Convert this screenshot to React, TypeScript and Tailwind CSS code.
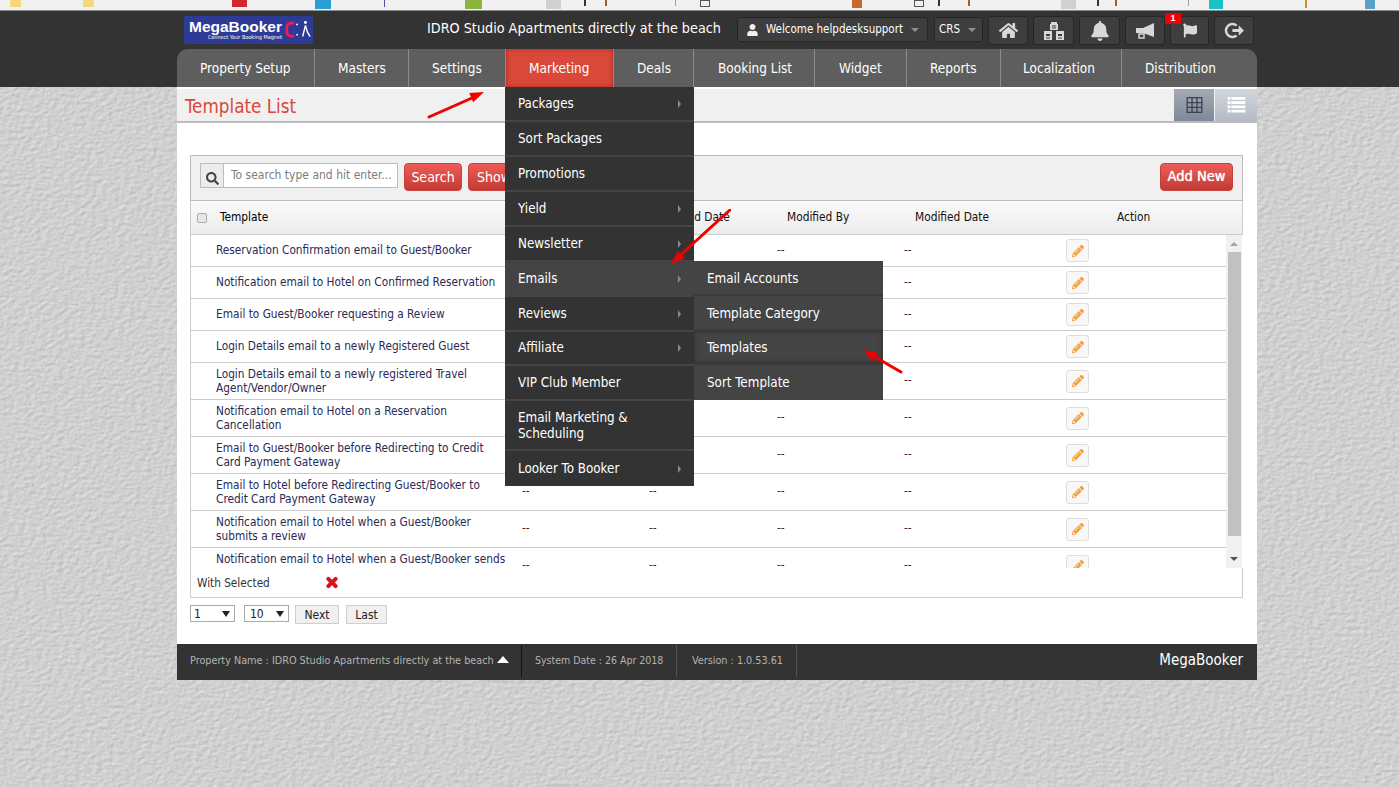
import React from "react";
import { FaHome, FaBell, FaFlag, FaUser, FaPencilAlt, FaTimes, FaSearch } from "react-icons/fa";

const navItems = [
  { t: "Property Setup", w: "w-[138px] pl-[23px]" },
  { t: "Masters", w: "w-[94px] pl-[23px]" },
  { t: "Settings", w: "w-[97px] pl-[23px]" },
  { t: "Marketing", w: "w-[108px] pl-[23px]", active: true },
  { t: "Deals", w: "w-[80px] pl-[23px]" },
  { t: "Booking List", w: "w-[121px] pl-[24px]" },
  { t: "Widget", w: "w-[92px] pl-[24px]" },
  { t: "Reports", w: "w-[94px] pl-[23px]" },
  { t: "Localization", w: "w-[121px] pl-[22px]" },
  { t: "Distribution", w: "w-[135px] pl-[23px]" },
];

const menu = [
  { t: "Packages", a: true, h: "h-[35px]" },
  { t: "Sort Packages", h: "h-[35px]" },
  { t: "Promotions", h: "h-[35px]" },
  { t: "Yield", a: true, h: "h-[35px]" },
  { t: "Newsletter", a: true, h: "h-[35px]" },
  { t: "Emails", a: true, h: "h-[35px]", on: true },
  { t: "Reviews", a: true, h: "h-[35px]" },
  { t: "Affiliate", a: true, h: "h-[34px]" },
  { t: "VIP Club Member", h: "h-[35px]" },
  { t: "Email Marketing & Scheduling", h: "h-[50px] pt-[2px]", wrap: true },
  { t: "Looker To Booker", a: true, h: "h-[35px]" },
];

const sub = [
  { t: "Email Accounts", h: "h-[35px] pt-[2px]" },
  { t: "Template Category", h: "h-[35px] pt-[2px]" },
  { t: "Templates", h: "h-[34px] pt-[2px]", on: true },
  { t: "Sort Template", h: "h-[35px]" },
];

const rows: { l: string[]; h: string; pb: string }[] = [
  { l: ["Reservation Confirmation email to Guest/Booker"], h: "h-[32px]", pb: "pb-[2px]" },
  { l: ["Notification email to Hotel on Confirmed Reservation"], h: "h-[32px]", pb: "pb-[2px]" },
  { l: ["Email to Guest/Booker requesting a Review"], h: "h-[32px]", pb: "pb-[2px]" },
  { l: ["Login Details email to a newly Registered Guest"], h: "h-[32px]", pb: "pb-[2px]" },
  { l: ["Login Details email to a newly registered Travel", "Agent/Vendor/Owner"], h: "h-[37px]", pb: "" },
  { l: ["Notification email to Hotel on a Reservation", "Cancellation"], h: "h-[37px]", pb: "" },
  { l: ["Email to Guest/Booker before Redirecting to Credit", "Card Payment Gateway"], h: "h-[37px]", pb: "" },
  { l: ["Email to Hotel before Redirecting Guest/Booker to", "Credit Card Payment Gateway"], h: "h-[37px]", pb: "" },
  { l: ["Notification email to Hotel when a Guest/Booker", "submits a review"], h: "h-[37px]", pb: "" },
  { l: ["Notification email to Hotel when a Guest/Booker sends"], h: "h-[37px]", pb: "pb-[14px]" },
];

function Arrow({ c, box, line, head }: { c: string; box: string; line: string; head: string }) {
  return (
    <svg className={c} viewBox={box} fill="none">
      <path d={line} stroke="#f00000" strokeWidth="3" strokeLinecap="round" />
      <path d={head} fill="#f00000" />
    </svg>
  );
}

function IconBtn({ children, w }: { children: React.ReactNode; w: string }) {
  return (
    <div className={`${w} h-[29px] rounded-[3px] border border-[#262626] bg-[#3e3e3e] flex items-center justify-center text-[#d8d8d8]`}>
      {children}
    </div>
  );
}

function Caret() {
  return <span className="ml-auto h-0 w-0 border-y-[4px] border-l-[3px] border-y-transparent border-l-[#8a8a8a]" />;
}

export default function App() {
  return (
    <div className="relative min-h-[787px] overflow-hidden bg-[#d1d1d1] font-['DejaVu_Sans_Condensed','DejaVu_Sans',sans-serif] [font-stretch:condensed]">
      <svg className="absolute inset-0 h-full w-full" aria-hidden="true">
        <filter id="paper" x="0" y="0" width="100%" height="100%" colorInterpolationFilters="sRGB">
          <feTurbulence type="fractalNoise" baseFrequency="0.18 0.28" numOctaves="3" seed="4" />
          <feDiffuseLighting surfaceScale="0.4" diffuseConstant="1" lightingColor="#f0f0f0">
            <feDistantLight azimuth="45" elevation="60" />
          </feDiffuseLighting>
        </filter>
        <rect width="100%" height="100%" filter="url(#paper)" />
      </svg>

      <div className="relative">
        {/* browser bookmarks strip */}
        <div className="flex h-[11px] items-start border-b border-[#8c8c8c] bg-[#f1f1f1]">
          <span className="ml-[10px] h-[7px] w-[11px] bg-[#f5d77c]" />
          <span className="ml-[62px] h-[7px] w-[11px] bg-[#f5d77c]" />
          <span className="ml-[138px] h-[7px] w-[15px] bg-[#d8252b]" />
          <span className="ml-[68px] h-[9px] w-[16px] bg-[#2a9fd6]" />
          <span className="ml-[53px] h-[7px] w-[1px] bg-[#5050a0]" />
          <span className="ml-[80px] h-[9px] w-[17px] bg-[#8ab53c]" />
          <span className="ml-[64px] h-[9px] w-[15px] bg-[#d0d0d0]" />
          <span className="ml-[23px] h-[6px] w-[2px] bg-[#333333]" />
          <span className="ml-[19px] h-[6px] w-[2px] bg-[#a06020]" />
          <span className="ml-[68px] h-[6px] w-[1px] bg-[#b0a090]" />
          <span className="ml-[24px] h-[7px] w-[10px] border border-[#555555]" />
          <span className="ml-[142px] h-[8px] w-[10px] bg-[#c8682a]" />
          <span className="ml-[52px] h-[7px] w-[10px] border border-[#555555]" />
          <span className="ml-[14px] h-[6px] w-[2px] bg-[#333333]" />
          <span className="ml-[28px] h-[6px] w-[2px] bg-[#a06020]" />
          <span className="ml-[91px] h-[9px] w-[15px] bg-[#d0d0d0]" />
          <span className="ml-[21px] h-[6px] w-[2px] bg-[#333333]" />
          <span className="ml-[16px] h-[6px] w-[2px] bg-[#a06020]" />
          <span className="ml-[71px] h-[6px] w-[1px] bg-[#b0a090]" />
          <span className="ml-[20px] h-[9px] w-[14px] bg-[#18c4c4]" />
          <span className="ml-[82px] h-[8px] w-[2px] bg-[#d08a30]" />
          <span className="ml-[58px] h-[9px] w-[10px] bg-[#5aa0c8]" />
        </div>

        {/* dark header */}
        <div className="h-[76px] bg-[#333333]">
          <div className="ml-[177px] w-[1080px]">
            <div className="flex h-[38px] items-start pt-[5px]">
              <div className="ml-[7px] flex h-[28px] w-[129px] items-center rounded-[2px] bg-[#2d3a96] pl-[4px]">
                <div className="flex w-[94px] flex-none flex-col items-end leading-none">
                  <span className="text-[15.500px] font-bold leading-[15px] text-white font-['Liberation_Sans',sans-serif]">MegaBooker</span>
                  <span className="text-[5.500px] leading-[7px] text-white">Connect Your Booking Magnet</span>
                </div>
                <svg viewBox="0 0 30 24" className="ml-[2px] h-[24px] w-[28px]" fill="none">
                  <path d="M11 4.500 H8 Q3 5 3 10 V13 Q3 18 8 18.500 H11" stroke="#ec1b5a" strokeWidth="3" />
                  <circle cx="14" cy="6" r="1" fill="#fff" />
                  <circle cx="14" cy="17" r="1" fill="#fff" />
                  <circle cx="23" cy="4" r="1.600" fill="#fff" />
                  <path d="M23 7 L20 19 M23 7 L25 14 L28 19" stroke="#fff" strokeWidth="1.500" />
                </svg>
              </div>
              <span className="ml-[114px] mt-[3px] w-[310px] whitespace-nowrap text-[14.250px] leading-[18px] text-white">IDRO Studio Apartments directly at the beach</span>
              <div className="mt-[1px] flex h-[25px] w-[191px] items-center rounded-[3px] border border-[#262626] bg-[#3e3e3e] pl-[9px] text-[11.500px] text-white">
                <FaUser className="h-[12px] w-[11px] text-[#f0f0f0]" />
                <span className="ml-[8px] whitespace-nowrap">Welcome helpdesksupport</span>
                <span className="ml-[8px] h-0 w-0 border-x-[4px] border-t-[4px] border-x-transparent border-t-[#8f8f8f]" />
              </div>
              <div className="ml-[6px] mt-[1px] flex h-[25px] w-[49px] items-center rounded-[3px] border border-[#262626] bg-[#3e3e3e] pl-[4px] text-[11.500px] text-white">
                CRS
                <span className="ml-[8px] h-0 w-0 border-x-[4px] border-t-[4px] border-x-transparent border-t-[#8f8f8f]" />
              </div>
              <div className="ml-[5px] flex gap-[5px]">
                <IconBtn w="w-[40px]"><FaHome className="h-[17px] w-[19px]" /></IconBtn>
                <IconBtn w="w-[41px]">
                  <svg viewBox="0 0 22 20" className="h-[20px] w-[22px]" fill="currentColor">
                    <path d="M8 1h6v2h1v6H7V3h1z" />
                    <path d="M1 10h8v9H1zM13 10h8v9h-8z" />
                    <path d="M3 13h4v2H3zM15 13h4v2h-4zM3 16.500h4v1H3zM15 16.500h4v1h-4z" fill="#3e3e3e" />
                    <path d="M9 4.500h4v1H9zM9 6.500h4v1H9z" fill="#3e3e3e" />
                  </svg>
                </IconBtn>
                <IconBtn w="w-[41px]"><FaBell className="h-[20px] w-[18px]" /></IconBtn>
                <IconBtn w="w-[40px]">
                  <svg viewBox="0 0 20 16" className="h-[16px] w-[20px]" fill="currentColor">
                    <path d="M19 0v14L8 10H1V5h7z" />
                    <path d="M4 11h5v4H4z" fill="none" stroke="currentColor" strokeWidth="1.500" />
                  </svg>
                </IconBtn>
                <div className="relative">
                  <IconBtn w="w-[39px]"><FaFlag className="h-[15px] w-[14px]" /></IconBtn>
                  <span className="absolute left-[-5px] top-[-3px] flex h-[11px] w-[16px] items-center justify-center bg-[#f00000] text-[9px] font-bold leading-none text-white font-['Liberation_Sans',sans-serif]">1</span>
                </div>
                <IconBtn w="w-[40px]">
                  <svg viewBox="0 0 20 18" className="h-[19px] w-[21px]" fill="none">
                    <path d="M12 4.200A6.200 6.200 0 1 0 12 13.800" stroke="currentColor" strokeWidth="2.400" />
                    <path d="M8 7.500h6V4l5 5-5 5v-3.500H8z" fill="currentColor" />
                  </svg>
                </IconBtn>
              </div>
            </div>
            <div className="flex h-[38px] overflow-hidden rounded-t-[11px] bg-[#5e5e5e]">
              {navItems.map((n) => (
                <div
                  key={n.t}
                  className={`${n.w} flex items-center whitespace-nowrap border-r border-[#8a8a8a] text-[13.500px] text-white last:border-r-0 ${n.active ? "bg-[#d9483b] shadow-[inset_0_0_4px_#a0281e]" : ""}`}
                >
                  {n.t}
                </div>
              ))}
            </div>
          </div>
        </div>

        {/* white page */}
        <div className="relative ml-[177px] w-[1080px] bg-white pt-[2px]">
          <div className="flex h-[34px] items-stretch border-b-2 border-[#bdbdbd] bg-[#f0f0f0]">
            <h1 className="ml-[8px] mt-[3px] self-center text-[18.700px] font-normal leading-[24px] text-[#d9483b]">Template List</h1>
            <div className="ml-auto flex gap-[1px]">
              <div className="flex w-[40px] items-center justify-center bg-gradient-to-b from-[#a5abb6] to-[#7f8898]">
                <svg viewBox="0 0 17 17" className="h-[16px] w-[17px]" fill="none" stroke="#3b4250" strokeWidth="1.400">
                  <path d="M.7.7h15.600v15.600H.7zM.7 5.900h15.600M.7 11.100h15.600M5.900.7v15.600M11.100.7v15.600" />
                </svg>
              </div>
              <div className="flex w-[42px] items-center justify-center bg-gradient-to-b from-[#d2d6dc] to-[#b5bbc6]">
                <svg viewBox="0 0 19 17" className="h-[16px] w-[19px]" fill="#ffffff">
                  <path d="M0 0h3v3H0zM4 0h15v3H4zM0 4.500h3v3H0zM4 4.500h15v3H4zM0 9h3v3H0zM4 9h15v3H4zM0 13.500h3v3H0zM4 13.500h15v3H4z" />
                </svg>
              </div>
            </div>
          </div>

          <div className="pl-[13px] pr-[14px] pt-[32px]">
            {/* toolbar */}
            <div className="flex h-[46px] items-start border border-[#bcbcbc] bg-[#f0f0f0] px-[9px] pt-[7px]">
              <div className="flex h-[25px] w-[198px] border border-[#bcbcbc] bg-white">
                <div className="flex w-[22px] items-end justify-center bg-[#ececec] pb-[2px]">
                  <FaSearch className="h-[13px] w-[13px] text-[#444444]" />
                </div>
                <div className="flex-1 whitespace-nowrap border-l border-[#bcbcbc] pl-[7px] pt-[1px] text-[12px] leading-[20px] text-[#7d7d7d]">To search type and hit enter...</div>
              </div>
              <button className="ml-[6px] h-[28px] w-[58px] rounded-[4px] border border-[#c9403a] bg-gradient-to-b from-[#ee5d58] to-[#c23a34] text-[14px] text-white">Search</button>
              <button className="ml-[6px] h-[28px] w-[60px] rounded-[4px] border border-[#c9403a] bg-gradient-to-b from-[#ee5d58] to-[#c23a34] pr-[8px] text-[14px] text-white">Show</button>
              <button className="ml-auto h-[28px] w-[73px] rounded-[4px] border border-[#c9403a] bg-gradient-to-b from-[#ee5d58] to-[#c23a34] text-[14.500px] text-white [text-shadow:0_0_1px_#ffffff]">Add New</button>
            </div>

            {/* header row */}
            <div className="flex h-[34px] items-center border-x border-b border-[#cccccc] bg-gradient-to-b from-[#fafafa] to-[#ececec] text-[11.800px] text-[#111111]">
              <span className="ml-[6px] h-[10px] w-[10px] rounded-[2px] border border-[#aaaaaa] bg-[#e6e6e6]" />
              <span className="ml-[13px] w-[313px] text-black">Template</span>
              <span className="w-[126px]">Created By</span>
              <span className="w-[128px] whitespace-nowrap">Created Date</span>
              <span className="w-[128px]">Modified By</span>
              <span className="w-[202px]">Modified Date</span>
              <span>Action</span>
            </div>

            {/* scrolling rows */}
            <div className="flex h-[333px] overflow-hidden border-l border-[#cccccc]">
              <div className="w-[1035px] flex-none">
                {rows.map((r) => (
                  <div key={r.l[0]} className={`${r.h} flex items-center border-b border-[#cccccc] text-[11.750px] text-[#2a2a55]`}>
                    <div className={`${r.pb} w-[331px] flex-none whitespace-nowrap pl-[25px] leading-[14px]`}>
                      {r.l.map((x) => (
                        <div key={x}>{x}</div>
                      ))}
                    </div>
                    <span className="w-[127px] flex-none text-[#333333]">--</span>
                    <span className="w-[128px] flex-none text-[#333333]">--</span>
                    <span className="w-[127px] flex-none text-[#333333]">--</span>
                    <span className="w-[162px] flex-none text-[#333333]">--</span>
                    <span className="flex h-[23px] w-[23px] flex-none items-center justify-center rounded-[3px] border border-[#dddddd] bg-[#f8f8f8]">
                      <FaPencilAlt className="h-[12px] w-[12px] text-[#f0a040]" />
                    </span>
                  </div>
                ))}
              </div>
              <div className="flex w-[16px] flex-none flex-col items-center bg-[#f1f1f1]">
                <span className="mt-[7px] h-0 w-0 border-x-[4px] border-b-[4px] border-x-transparent border-b-[#a3a3a3]" />
                <span className="mt-[6px] h-[284px] w-[13px] bg-[#c1c1c1]" />
                <span className="mt-[21px] h-0 w-0 border-x-[4px] border-t-[4px] border-x-transparent border-t-[#505050]" />
              </div>
            </div>

            {/* with selected */}
            <div className="flex h-[30px] items-center border-x border-b border-[#cccccc] bg-white pb-[1px] text-[11.700px] text-[#333333]">
              <span className="ml-[6px] mt-[3px] w-[128px]">With Selected</span>
              <FaTimes className="h-[15px] w-[14px] text-[#d8121c] [stroke-width:40]" />
            </div>

            {/* pager */}
            <div className="mt-[7px] flex items-start text-[12px] text-[#222222]">
              <div className="flex h-[17px] w-[45px] items-center border border-[#aaaaaa] bg-white pl-[3px]">
                1
                <span className="ml-auto mr-[4px] h-0 w-0 border-x-[4px] border-t-[6px] border-x-transparent border-t-[#222222]" />
              </div>
              <div className="ml-[9px] flex h-[17px] w-[45px] items-center border border-[#aaaaaa] bg-white pl-[5px]">
                10
                <span className="ml-auto mr-[4px] h-0 w-0 border-x-[4px] border-t-[6px] border-x-transparent border-t-[#222222]" />
              </div>
              <span className="ml-[6px] flex h-[19px] w-[44px] items-center justify-center border border-[#cfcfcf] bg-[#f0f0f0]">Next</span>
              <span className="ml-[7px] flex h-[19px] w-[41px] items-center justify-center border border-[#cfcfcf] bg-[#f0f0f0]">Last</span>
            </div>
          </div>

          {/* footer */}
          <div className="mt-[20px] flex h-[36px] items-center bg-[#333333] pb-[2px] text-[10.750px] text-[#b4b4b4]">
            <div className="flex h-[32px] w-[345px] flex-none items-center border-r border-[#111111] pl-[13px]">
              <span className="whitespace-nowrap">Property Name : IDRO Studio Apartments directly at the beach</span>
              <span className="ml-[3px] h-0 w-0 -translate-y-[2px] border-x-[6px] border-b-[7px] border-x-transparent border-b-white" />
            </div>
            <div className="flex h-[32px] w-[155px] flex-none items-center whitespace-nowrap border-r border-[#555555] pl-[13px] text-[10.500px]">System Date : 26 Apr 2018</div>
            <div className="flex h-[32px] w-[120px] flex-none items-center whitespace-nowrap border-r border-[#555555] pl-[15px]">Version : 1.0.53.61</div>
            <span className="mb-[2px] ml-auto pr-[14px] text-[15px] text-white">MegaBooker</span>
          </div>

          {/* dropdown menus */}
          <div className="absolute left-[328px] top-0 w-[189px] bg-[#333333] text-[13.300px] text-white">
            {menu.map((m) => (
              <div key={m.t} className={`${m.h} flex items-center border-b-2 border-[#444444] px-[13px] last:border-b-0 ${m.on ? "bg-[#444444]" : ""}`}>
                <span className={m.wrap ? "w-[130px] leading-[16px]" : ""}>{m.t}</span>
                {m.a ? <Caret /> : null}
              </div>
            ))}
          </div>
          <div className="absolute left-[517px] top-[174px] w-[189px] bg-[#444444] text-[13.300px] text-white">
            {sub.map((m) => (
              <div key={m.t} className={`${m.h} flex items-center border-b-2 border-[#3a3a3a] px-[13px] last:border-b-0 ${m.on ? "shadow-[inset_0_0_5px_#2e2e2e]" : ""}`}>
                {m.t}
              </div>
            ))}
          </div>

          {/* annotation arrows */}
          <Arrow
            c="absolute left-[250px] top-[3px] h-[30px] w-[60px]"
            box="0 0 60 30"
            line="M2 27 L45 8"
            head="M57 2 L46.200 12.300 L42.200 3.100 Z"
          />
          <Arrow
            c="absolute left-[494px] top-[122px] h-[56px] w-[60px]"
            box="0 0 60 56"
            line="M59 1 L10 45.500"
            head="M0 55 L13.700 49.300 L7.100 41.900 Z"
          />
          <Arrow
            c="absolute left-[686px] top-[263px] h-[24px] w-[40px]"
            box="0 0 40 24"
            line="M38 22 L12 7"
            head="M0 0 L14.700 2.600 L9.700 11.200 Z"
          />
        </div>
      </div>
    </div>
  );
}
